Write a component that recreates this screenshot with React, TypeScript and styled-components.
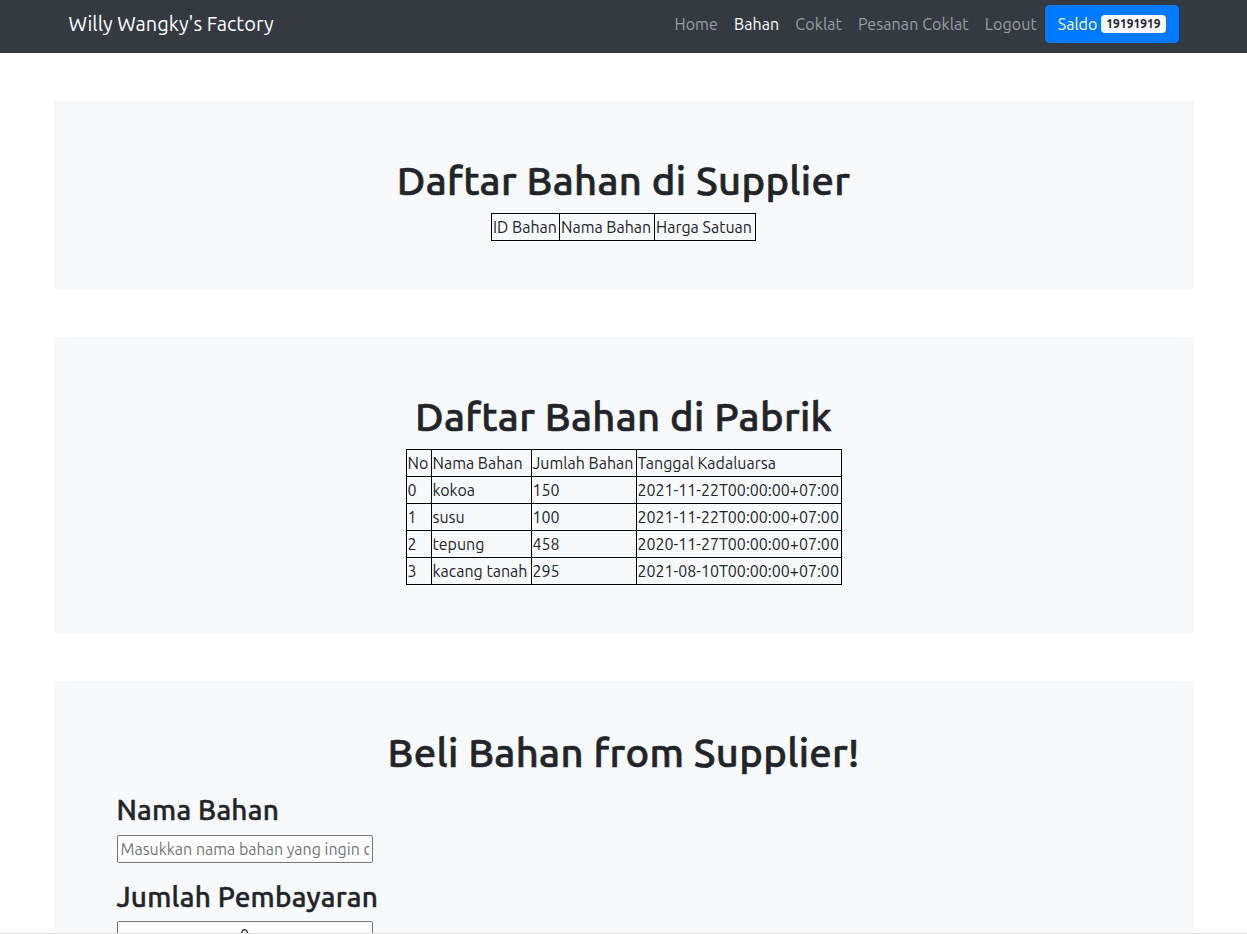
import React from "react";
import styled, { createGlobalStyle } from "styled-components";

const FONT = `Ubuntu, "Open Sans", "Noto Sans", sans-serif`;

const GlobalStyle = createGlobalStyle`
  html, body { margin: 0; padding: 0; }
  body {
    font-family: ${FONT};
    font-size: 16px;
    line-height: 1.5;
    color: #212529;
    background: #fff;
  }
  * { box-sizing: border-box; }
`;

const NavBar = styled.nav`
  height: 53px;
  background: #343a40;
  padding-top: 5px;
`;

const NavInner = styled.div`
  width: 1140px;
  height: 38px;
  margin: 0 auto;
  padding: 0 15px;
  display: flex;
  align-items: center;
  justify-content: space-between;
`;

const Brand = styled.a`
  font-size: 20px;
  line-height: 30px;
  color: #fff;
  text-decoration: none;
  letter-spacing: 0.05px;
`;

const NavList = styled.div`
  display: flex;
  align-items: center;
`;

const NavLink = styled.a<{ $active?: boolean }>`
  padding: 8px;
  font-size: 16px;
  line-height: 24px;
  letter-spacing: 0.1px;
  color: ${(p) => (p.$active ? "#fff" : "rgba(255,255,255,0.5)")};
  text-decoration: none;
`;

const SaldoButton = styled.button`
  font-family: ${FONT};
  background: #007bff;
  color: #fff;
  border: 1px solid #007bff;
  border-radius: 4px;
  padding: 6px 12px;
  font-size: 16px;
  line-height: 24px;
  display: flex;
  align-items: center;
  gap: 4px;
`;

const Badge = styled.span`
  background: #f8f9fa;
  color: #212529;
  font-size: 12px;
  font-weight: 700;
  line-height: 1;
  padding: 3px 5px;
  border-radius: 4px;
`;

const Main = styled.main`
  width: 1140px;
  margin: 0 auto;
  display: flex;
  flex-direction: column;
  gap: 48px;
  padding-top: 48px;
`;

const Jumbotron = styled.section<{ $top?: number }>`
  background: #f8f9fa;
  padding: ${(p) => p.$top ?? 56}px 32px 48px;
  text-align: center;
`;

const Title = styled.h1<{ $mb?: number }>`
  margin: 0 0 ${(p) => p.$mb ?? 8}px;
  font-size: 40px;
  line-height: 48px;
  font-weight: 500;
  letter-spacing: 0.3px;
  -webkit-text-stroke: 0.6px #212529;
`;

const Table = styled.table<{ $w: number }>`
  border-collapse: collapse;
  table-layout: fixed;
  width: ${(p) => p.$w}px;
  margin: 0 auto;
  text-align: left;
`;

const Col = styled.col<{ $w: number }>`
  width: ${(p) => p.$w}px;
`;

const Cell = styled.td`
  border: 1px solid #000;
  padding: 1px;
  font-size: 16px;
  line-height: 24px;
  white-space: nowrap;
  overflow: hidden;
`;

const Form = styled.form`
  text-align: left;
  padding-left: 31px;
`;

const Label = styled.h3`
  margin: 0 0 8px;
  font-size: 28px;
  line-height: 33.6px;
  font-weight: 500;
  letter-spacing: 0.2px;
  -webkit-text-stroke: 0.45px #212529;
`;

const Input = styled.input<{ $center?: boolean }>`
  display: block;
  width: 256px;
  height: 28px;
  margin: 0 0 17px;
  padding: 1px 3px;
  border: 1px solid #767676;
  border-radius: 2px;
  background: #fff;
  font-family: ${FONT};
  font-size: 16px;
  color: #212529;
  text-align: ${(p) => (p.$center ? "center" : "left")};
  &::placeholder { color: #757575; }
`;

const BottomEdge = styled.div`
  position: fixed;
  left: 0;
  right: 0;
  bottom: 0;
  height: 1px;
  background: #dedede;
`;

const pabrik = [
  ["0", "kokoa", "150", "2021-11-22T00:00:00+07:00"],
  ["1", "susu", "100", "2021-11-22T00:00:00+07:00"],
  ["2", "tepung", "458", "2020-11-27T00:00:00+07:00"],
  ["3", "kacang tanah", "295", "2021-08-10T00:00:00+07:00"],
];

export default function App() {
  return (
    <>
      <GlobalStyle />
      <NavBar>
        <NavInner>
          <Brand href="#">Willy Wangky's Factory</Brand>
          <NavList>
            <NavLink href="#">Home</NavLink>
            <NavLink href="#" $active>Bahan</NavLink>
            <NavLink href="#">Coklat</NavLink>
            <NavLink href="#">Pesanan Coklat</NavLink>
            <NavLink href="#">Logout</NavLink>
            <SaldoButton type="button">
              Saldo <Badge>19191919</Badge>
            </SaldoButton>
          </NavList>
        </NavInner>
      </NavBar>
      <Main>
        <Jumbotron>
          <Title>Daftar Bahan di Supplier</Title>
          <Table $w={265}>
            <colgroup>
              <Col $w={68} />
              <Col $w={95} />
              <Col $w={101} />
            </colgroup>
            <tbody>
              <tr>
                <Cell>ID Bahan</Cell>
                <Cell>Nama Bahan</Cell>
                <Cell>Harga Satuan</Cell>
              </tr>
            </tbody>
          </Table>
        </Jumbotron>
        <Jumbotron>
          <Title>Daftar Bahan di Pabrik</Title>
          <Table $w={436}>
            <colgroup>
              <Col $w={25} />
              <Col $w={100} />
              <Col $w={105} />
              <Col $w={205} />
            </colgroup>
            <tbody>
              <tr>
                <Cell>No</Cell>
                <Cell>Nama Bahan</Cell>
                <Cell>Jumlah Bahan</Cell>
                <Cell>Tanggal Kadaluarsa</Cell>
              </tr>
              {pabrik.map((r) => (
                <tr key={r[0]}>
                  {r.map((c, i) => (
                    <Cell key={i}>{c}</Cell>
                  ))}
                </tr>
              ))}
            </tbody>
          </Table>
        </Jumbotron>
        <Jumbotron $top={48}>
          <Title $mb={16}>Beli Bahan from Supplier!</Title>
          <Form onSubmit={(e) => e.preventDefault()}>
            <Label>Nama Bahan</Label>
            <Input type="text" placeholder="Masukkan nama bahan yang ingin dibeli" />
            <Label>Jumlah Pembayaran</Label>
            <Input type="text" defaultValue="0" $center />
          </Form>
        </Jumbotron>
      </Main>
      <BottomEdge />
    </>
  );
}
